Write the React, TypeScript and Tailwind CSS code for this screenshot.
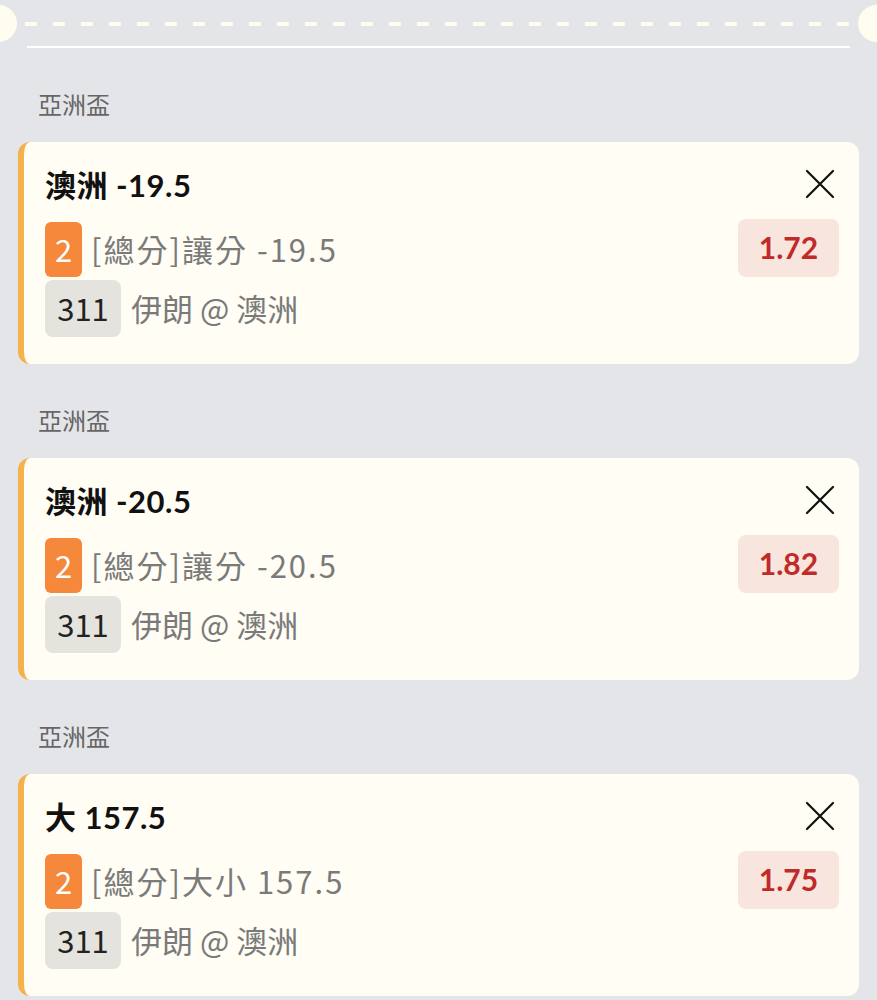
type Bet = {
  league: string
  title: string
  market: string
  odds: string
}

const bets: Bet[] = [
  { league: '亞洲盃', title: '澳洲 -19.5', market: '[總分]讓分 -19.5', odds: '1.72' },
  { league: '亞洲盃', title: '澳洲 -20.5', market: '[總分]讓分 -20.5', odds: '1.82' },
  { league: '亞洲盃', title: '大 157.5', market: '[總分]大小 157.5', odds: '1.75' },
]

const cjk = { fontFamily: '"Noto Sans CJK TC", "Noto Sans", sans-serif' }

function CloseIcon() {
  return (
    <svg width="30" height="30" viewBox="0 0 30 30" fill="none" stroke="#111" strokeWidth="2.2" strokeLinecap="round">
      <path d="M2 2 28 28M28 2 2 28" />
    </svg>
  )
}

function BetCard({ bet }: { bet: Bet }) {
  return (
    <div className="mx-[18px] flex rounded-[12px] border-l-[6px] border-[#f4b14c] bg-[#fffdf4] pl-[21px] pr-[20px] pb-[27px]">
      <div className="flex-1 pt-[25px]">
        <div className="text-[31px] font-bold leading-[36px] tracking-[0.5px] text-[#111]">{bet.title}</div>
        <div className="mt-[19px] flex h-[55px] items-center" style={cjk}>
          <span className="flex h-[55px] w-[37px] items-center justify-center rounded-[6px] bg-[#f5883a] text-[31px] text-white">
            2
          </span>
          <span className="ml-[9px] text-[31px] tracking-[2px] text-[#7a7a7a]">{bet.market}</span>
        </div>
        <div className="mt-[3px] flex h-[57px] items-center" style={cjk}>
          <span className="flex h-[57px] w-[76px] items-center justify-center rounded-[8px] bg-[#e4e3de] text-[31px] text-[#222]">
            311
          </span>
          <span className="ml-[10px] text-[31px] text-[#7a7a7a]">伊朗 @ 澳洲</span>
        </div>
      </div>
      <div className="flex flex-col items-end">
        <div className="mr-[4px] mt-[27px] flex h-[30px] w-[30px] items-center justify-center">
          <CloseIcon />
        </div>
        <div className="mt-[20px] flex h-[58px] w-[101px] items-center justify-center rounded-[8px] bg-[#f7e5de] text-[30px] font-bold text-[#c02a28]">
          {bet.odds}
        </div>
      </div>
    </div>
  )
}

export default function App() {
  return (
    <div
      className="min-h-screen overflow-hidden bg-[#e4e5e8]"
      style={{ fontFamily: 'Lato, "Noto Sans CJK TC", sans-serif' }}
    >
      {/* ticket edge */}
      <div className="flex items-center pt-[5px]">
        <div className="-ml-[20px] h-[37px] w-[37px] shrink-0 rounded-full bg-[#fffdf0]" />
        <svg className="ml-[8px] h-[4px] flex-1" preserveAspectRatio="none">
          <line x1="0" y1="2" x2="100%" y2="2" stroke="#fffdf0" strokeWidth="4" strokeDasharray="12 16" />
        </svg>
        <div className="-mr-[18px] ml-[6px] h-[37px] w-[37px] shrink-0 rounded-full bg-[#fffdf0]" />
      </div>
      <div className="mx-[27px] mt-[4px] h-[1.5px] bg-white" />

      <div className="mt-[41px]">
        {bets.map((bet, i) => (
          <div key={i} className={i === 0 ? '' : 'mt-[41px]'}>
            <div className="mb-[21px] pl-[38px] text-[24px] leading-[32px] text-[#666]">{bet.league}</div>
            <BetCard bet={bet} />
          </div>
        ))}
      </div>
    </div>
  )
}
